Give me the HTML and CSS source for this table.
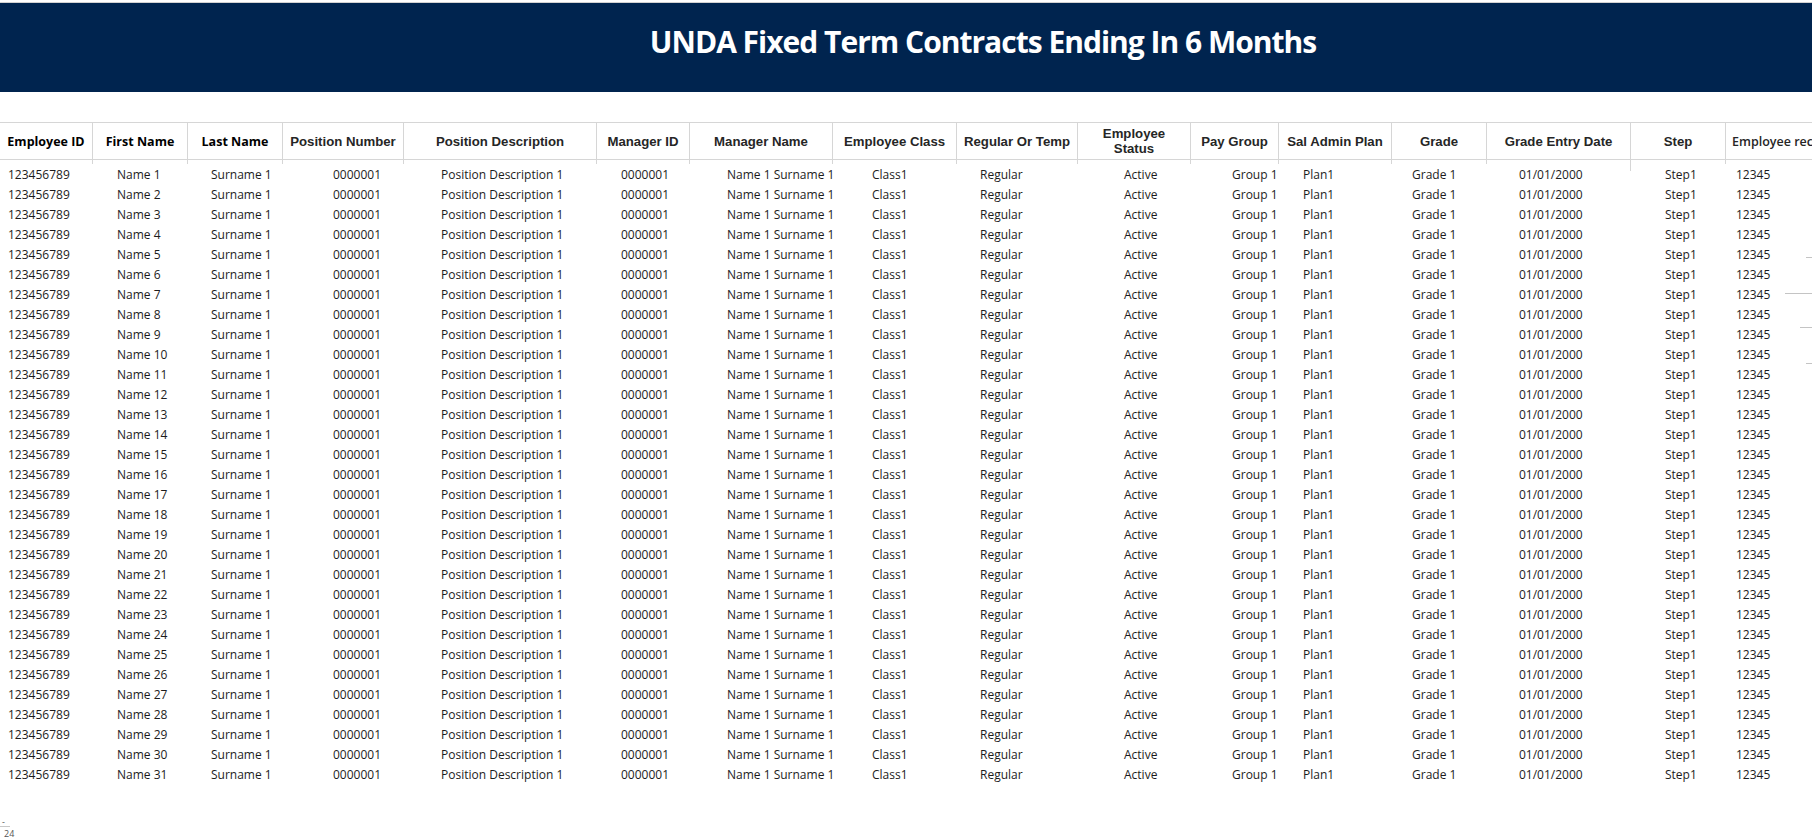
FILE: index.html
```html
<!DOCTYPE html>
<html lang="en">
<head>
<meta charset="utf-8">
<title>UNDA Fixed Term Contracts Ending In 6 Months</title>
<link rel="stylesheet" href="styles.css">
</head>
<body>
<div class="page">
  <div class="topline"></div>
  <header class="banner"><h1 class="title">UNDA Fixed Term Contracts Ending In 6 Months</h1></header>

  <section class="report">
    <div class="thead">
      <div class="th seg">Employee ID</div>
      <div class="th seg">First Name</div>
      <div class="th seg">Last Name</div>
      <div class="th">Position Number</div>
      <div class="th">Position Description</div>
      <div class="th">Manager ID</div>
      <div class="th">Manager Name</div>
      <div class="th">Employee Class</div>
      <div class="th">Regular Or Temp</div>
      <div class="th">Employee Status</div>
      <div class="th">Pay Group</div>
      <div class="th">Sal Admin Plan</div>
      <div class="th">Grade</div>
      <div class="th">Grade Entry Date</div>
      <div class="th">Step</div>
      <div class="th last">Employee record</div>
    </div>
    <div class="ticks">
      <span></span><span></span><span></span><span></span><span></span><span></span><span></span><span></span><span></span><span></span><span></span><span></span><span></span><span class="long"></span><span></span><span class="none"></span>
    </div>

    <div class="tbody" id="tbody"></div>
  </section>

  <div class="foot">
    <span class="foot-dash">-</span>
    <span class="foot-line"></span>
    <span class="foot-num">24</span>
  </div>

  <div class="edge-marks">
    <span class="mark m1"></span>
    <span class="mark m2"></span>
    <span class="mark m3"></span>
    <span class="mark m4"></span>
  </div>
</div>
<script src="app.js"></script>
</body>
</html>
```

FILE: app.js
```js
(function () {
  var body = document.getElementById('tbody');
  var html = '';
  for (var i = 1; i <= 31; i++) {
    html += '<div class="tr">' +
      '<span>123456789</span>' +
      '<span>Name ' + i + '</span>' +
      '<span>Surname 1</span>' +
      '<span>0000001</span>' +
      '<span>Position Description 1</span>' +
      '<span>0000001</span>' +
      '<span>Name 1 Surname 1</span>' +
      '<span>Class1</span>' +
      '<span>Regular</span>' +
      '<span>Active</span>' +
      '<span>Group 1</span>' +
      '<span>Plan1</span>' +
      '<span>Grade 1</span>' +
      '<span>01/01/2000</span>' +
      '<span>Step1</span>' +
      '<span>12345</span>' +
      '</div>';
  }
  body.innerHTML = html;
})();
```

FILE: styles.css
```css
html, body {
  margin: 0;
  padding: 0;
  background: #ffffff;
  overflow: hidden;
}

.page {
  position: relative;
  width: 1812px;
  height: 837px;
  overflow: hidden;
  font-family: "Open Sans", "Noto Sans", sans-serif;
  color: #1c1c1c;
}

.topline {
  height: 2px;
  border-bottom: 1px solid #d2d2d2;
  border-top-left-radius: 6px;
}

.banner {
  height: 89px;
  background: #00244f;
  display: flex;
  justify-content: center;
  align-items: flex-start;
  padding-left: 154px;
  box-sizing: border-box;
}

.title {
  margin: 0;
  padding-top: 18px;
  color: #ffffff;
  font-family: "Open Sans", sans-serif;
  font-weight: 700;
  font-size: 30px;
  letter-spacing: -1px;
  line-height: 42px;
  white-space: nowrap;
}

.report {
  margin-top: 30px;
}

.thead {
  display: grid;
  grid-template-columns: 93px 95px 95px 121px 193px 93px 143px 124px 121px 113px 88px 113px 95px 144px 95px 200px;
  border-top: 1px solid #d6d6d6;
  border-bottom: 1px solid #d6d6d6;
  height: 36px;
  width: 1926px;
}

.th {
  display: flex;
  align-items: center;
  justify-content: center;
  text-align: center;
  padding: 0 6px;
  border-right: 1px solid #d6d6d6;
  font-family: "Liberation Sans", Arial, sans-serif;
  font-weight: 700;
  font-size: 13.2px;
  line-height: 15px;
  color: #262626;
  overflow: hidden;
}

.th.seg {
  font-family: "Open Sans", sans-serif;
  font-size: 12.5px;
  color: #000000;
}

.th.last {
  justify-content: flex-start;
  font-family: "Open Sans", sans-serif;
  font-weight: 600;
  font-size: 12.5px;
  white-space: nowrap;
  border-right: none;
}

.ticks {
  display: grid;
  grid-template-columns: 93px 95px 95px 121px 193px 93px 143px 124px 121px 113px 88px 113px 95px 144px 95px 200px;
  height: 5px;
  width: 1926px;
}

.ticks span {
  border-right: 1px solid #d6d6d6;
  height: 4px;
}

.ticks span.long {
  height: 11px;
}

.ticks span.none {
  border-right: none;
}

.tbody {
  display: flex;
  flex-direction: column;
}

.tr {
  display: grid;
  grid-template-columns: 109px 94px 122px 108px 180px 106px 145px 108px 144px 108px 71px 109px 107px 146px 71px 120px;
  padding-left: 8px;
  height: 20px;
  font-size: 12px;
  line-height: 20px;
  white-space: nowrap;
}

.tr span {
  overflow: visible;
}

.foot {
  display: flex;
  flex-direction: column;
  align-items: flex-start;
  margin-top: 33px;
  padding-left: 2px;
  font-family: "Open Sans", sans-serif;
  color: #555555;
}

.foot-dash {
  font-size: 9px;
  line-height: 8px;
}

.foot-line {
  display: block;
  width: 10px;
  height: 1px;
  margin-left: -2px;
  background: #c8c8c8;
}

.foot-num {
  font-size: 9px;
  line-height: 14px;
  padding-left: 2px;
}

.edge-marks {
  position: absolute;
  top: 0;
  right: 0;
  width: 30px;
  height: 400px;
  pointer-events: none;
}

.mark {
  position: absolute;
  right: 0;
  height: 1px;
  background: #c4c4c4;
}

.m1 { top: 257px; width: 6px; }
.m2 { top: 293px; width: 27px; }
.m3 { top: 327px; width: 12px; }
.m4 { top: 363px; width: 6px; }
```
